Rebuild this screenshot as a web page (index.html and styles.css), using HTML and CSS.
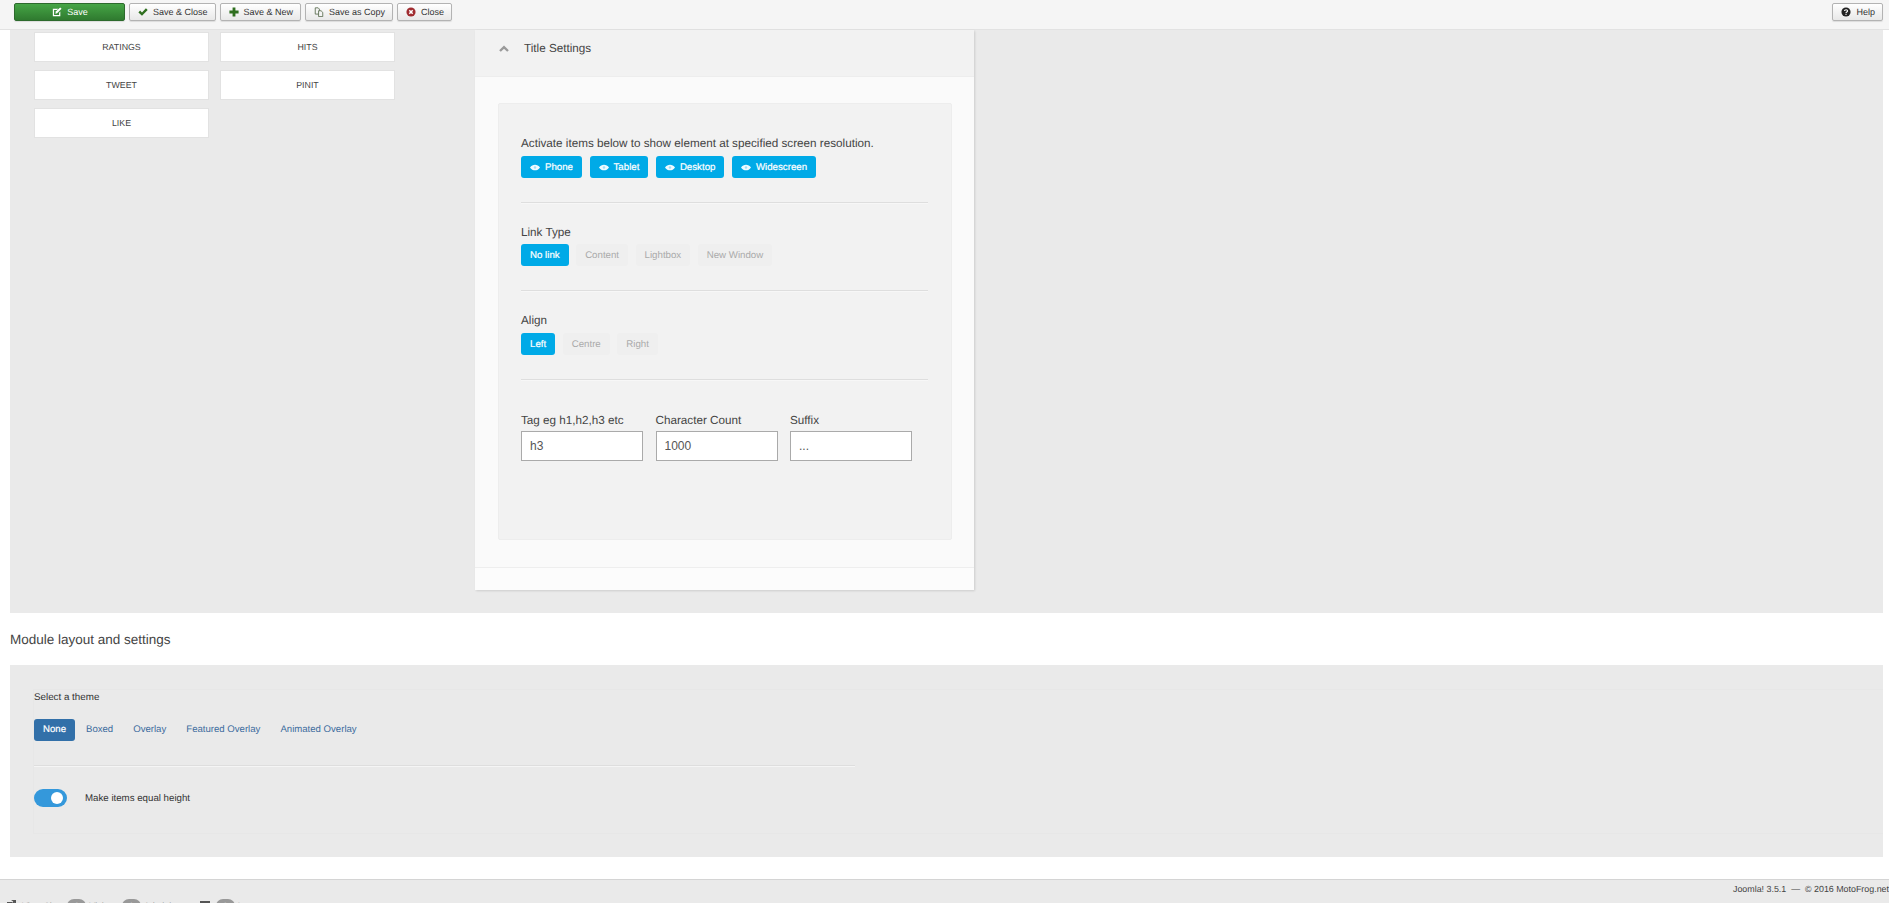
FILE: index.html
```html
<!DOCTYPE html>
<html lang="en">
<head>
    <meta charset="UTF-8">
    <title>Module settings</title>
    <link rel="stylesheet" href="styles.css">
</head>
<body>
    <div class="toolbar">
        <button class="tbtn tbtn-save">
            <svg class="ico" viewBox="0 0 12 12"><path d="M1 2h6.500L6 3.500H2.500v6h6V7L10 5.500V11H1z" fill="#fff"/><path d="M4.500 5.500 9.800.5l1.700 1.700L6.200 7.500l-2.200.5z" fill="#fff"/></svg>
            Save
        </button>
        <button class="tbtn">
            <svg class="ico" viewBox="0 0 12 12"><path d="M.5 6.500 2.500 4.300l2.300 2.300L9.500 1.500l2.100 2.100L4.800 10.500z" fill="#2f6f1f"/></svg>
            Save &amp; Close
        </button>
        <button class="tbtn">
            <svg class="ico" viewBox="0 0 12 12"><path d="M4.300.5h3.400v3.800h3.800v3.400H7.700v3.800H4.300V7.700H.5V4.300h3.800z" fill="#2f6f1f"/></svg>
            Save &amp; New
        </button>
        <button class="tbtn">
            <svg class="ico" viewBox="0 0 12 12"><path d="M1.500 1h3.500l1.500 1.500v6h-5z" fill="#f4f4f4" stroke="#55694a"/><path d="M5.500 4.500h3l2 2v5h-5z" fill="#f4f4f4" stroke="#55694a"/></svg>
            Save as Copy
        </button>
        <button class="tbtn">
            <svg class="ico" viewBox="0 0 12 12"><circle cx="6" cy="6" r="5.500" fill="#a02c30"/><path d="M4 4l4 4M8 4l-4 4" stroke="#fff" stroke-width="1.800"/></svg>
            Close
        </button>
        <button class="tbtn tbtn-help">
            <svg class="ico" viewBox="0 0 12 12"><circle cx="6" cy="6" r="5.500" fill="#222"/><path d="M4.200 4.700C4.300 2.800 7.900 2.800 7.900 4.700 7.900 6 6 6 6 7.200" fill="none" stroke="#fff" stroke-width="1.400"/><rect x="5.300" y="8.100" width="1.400" height="1.400" fill="#fff"/></svg>
            Help
        </button>
    </div>

    <div class="grey-panel top-panel">
        <div class="cards">
            <div class="card">RATINGS</div>
            <div class="card">HITS</div>
            <div class="card">TWEET</div>
            <div class="card">PINIT</div>
            <div class="card">LIKE</div>
        </div>

        <div class="accordion">
            <div class="acc-head">
                <svg class="chevron" viewBox="0 0 10 7"><path d="M1 6 5 2.200 9 6" fill="none" stroke="#9a9a9a" stroke-width="2.400"/></svg>
                Title Settings
            </div>
            <div class="acc-body">
                <div class="inner-box">
                    <div class="group">
                        <div class="lbl">Activate items below to show element at specified screen resolution.</div>
                        <div class="pills">
                            <span class="pill on"><svg class="eye" viewBox="0 0 10 7"><path d="M0 3.500C2.500-.3 7.500-.3 10 3.500 7.500 7.300 2.500 7.300 0 3.500z" fill="#eefaff"/><circle cx="5" cy="3.500" r="1.200" fill="#9fdff7"/></svg>Phone</span>
                            <span class="pill on"><svg class="eye" viewBox="0 0 10 7"><path d="M0 3.500C2.500-.3 7.500-.3 10 3.500 7.500 7.300 2.500 7.300 0 3.500z" fill="#eefaff"/><circle cx="5" cy="3.500" r="1.200" fill="#9fdff7"/></svg>Tablet</span>
                            <span class="pill on"><svg class="eye" viewBox="0 0 10 7"><path d="M0 3.500C2.500-.3 7.500-.3 10 3.500 7.500 7.300 2.500 7.300 0 3.500z" fill="#eefaff"/><circle cx="5" cy="3.500" r="1.200" fill="#9fdff7"/></svg>Desktop</span>
                            <span class="pill on"><svg class="eye" viewBox="0 0 10 7"><path d="M0 3.500C2.500-.3 7.500-.3 10 3.500 7.500 7.300 2.500 7.300 0 3.500z" fill="#eefaff"/><circle cx="5" cy="3.500" r="1.200" fill="#9fdff7"/></svg>Widescreen</span>
                        </div>
                    </div>
                    <div class="group">
                        <div class="lbl">Link Type</div>
                        <div class="pills">
                            <span class="pill on">No link</span>
                            <span class="pill">Content</span>
                            <span class="pill">Lightbox</span>
                            <span class="pill">New Window</span>
                        </div>
                    </div>
                    <div class="group">
                        <div class="lbl">Align</div>
                        <div class="pills">
                            <span class="pill on">Left</span>
                            <span class="pill">Centre</span>
                            <span class="pill">Right</span>
                        </div>
                    </div>
                    <div class="fields">
                        <div class="field">
                            <div class="lbl">Tag eg h1,h2,h3 etc</div>
                            <input class="inp" type="text" value="h3">
                        </div>
                        <div class="field">
                            <div class="lbl">Character Count</div>
                            <input class="inp" type="text" value="1000">
                        </div>
                        <div class="field">
                            <div class="lbl">Suffix</div>
                            <input class="inp" type="text" value="...">
                        </div>
                    </div>
                </div>
            </div>
            <div class="acc-foot"></div>
        </div>
    </div>

    <h4 class="section-title">Module layout and settings</h4>

    <div class="grey-panel module-panel">
        <div class="module-inner">
            <div class="theme-label">Select a theme</div>
            <div class="themes">
                <a class="theme active">None</a>
                <a class="theme">Boxed</a>
                <a class="theme">Overlay</a>
                <a class="theme">Featured Overlay</a>
                <a class="theme">Animated Overlay</a>
            </div>
            <div class="module-rule"></div>
            <div class="switch-row">
                <span class="switch"><span class="knob"></span></span>
                <span class="switch-label">Make items equal height</span>
            </div>
        </div>
    </div>

    <div class="status">
        <div class="status-left">
            <span class="st-item st-view">
                <svg class="st-ico" viewBox="0 0 9 9"><path d="M0 2h5v1H1v5h5V5h1v4H0z" fill="#555"/><path d="M4 0h5v4L7.500 2.700 5 5 4 4l2.300-2.500z" fill="#555"/></svg>
                View Site
            </span>
            <span class="st-item"><span class="count">0</span>Visitors</span>
            <span class="st-item"><span class="count">1</span>Administrator</span>
            <span class="st-item"><span class="square"></span><span class="count">0</span>Log out</span>
        </div>
        <div class="status-right">Joomla! 3.5.1 &nbsp;&mdash;&nbsp; &copy; 2016 MotoFrog.net</div>
    </div>
</body>
</html>
```

FILE: styles.css
```css
* {
    box-sizing: border-box;
}
html, body {
    height: 903px;
    overflow: hidden;
}
body {
    margin: 0;
    background: #fff;
    color: #444;
    font-family: "Liberation Sans", Arial, sans-serif;
    font-size: 13px;
    text-rendering: geometricPrecision;
}

/* top bar */
.toolbar {
    height: 30px;
    padding: 3px 6px 0 14px;
    display: flex;
    gap: 4px;
    background: #f5f5f5;
    border-bottom: 1px solid #e2e2e2;
}
.tbtn {
    height: 18px;
    padding: 0 7px 0 8px;
    display: flex;
    align-items: center;
    justify-content: center;
    gap: 5px;
    font-family: inherit;
    font-size: 9px;
    text-rendering: geometricPrecision;
    color: #333;
    background: linear-gradient(#fff, #e8e8e8);
    border: 1px solid #b3b3b3;
    border-radius: 2px;
    box-shadow: 0 1px 1px rgba(0, 0, 0, .1);
}
.tbtn-save {
    width: 111px;
    color: #fff;
    background: linear-gradient(#46a546, #2f7a2f);
    border-color: #2d6a2d;
}
.tbtn-help {
    margin-left: auto;
}
.ico {
    width: 10px;
    height: 10px;
}

/* shared grey area */
.grey-panel {
    margin: 0 6px 0 10px;
    background: #eaeaea;
}
.top-panel {
    height: 583px;
    display: flex;
    align-items: flex-start;
}

/* left cards */
.cards {
    width: 441px;
    padding: 2px 0 0 24px;
    display: grid;
    grid-template-columns: 175px 175px;
    grid-auto-rows: 30px;
    column-gap: 11px;
    row-gap: 8px;
}
.card {
    display: flex;
    align-items: center;
    justify-content: center;
    font-size: 8.800px;
    background: #fff;
    border: 1px solid #e2e2e2;
}

/* title settings */
.accordion {
    width: 499px;
    margin-left: 24px;
    background: #fafafa;
    box-shadow: 1px 1px 2px rgba(0, 0, 0, .12);
}
.acc-head {
    height: 47px;
    padding: 0 0 9px 24px;
    display: flex;
    align-items: center;
    gap: 15px;
    font-size: 11.700px;
    background: #f2f2f2;
    border-bottom: 1px solid #ededed;
}
.chevron {
    width: 10px;
    height: 7px;
}
.acc-body {
    padding: 26px 22px 27px 23px;
    border-bottom: 1px solid #eee;
}
.inner-box {
    height: 437px;
    padding: 32px 23px 0 22px;
    background: #f2f2f2;
    border: 1px solid #ededed;
    border-radius: 2px;
}
.group {
    padding-bottom: 24px;
    border-bottom: 1px solid #dedede;
    box-shadow: 0 1px 0 #f7f7f7;
}
.group + .group {
    padding-top: 22px;
}
.group + .group .pills {
    margin-top: 3px;
}
.group:nth-child(3) .pills {
    margin-top: 4px;
}
.lbl {
    height: 16px;
    line-height: 16px;
    font-size: 11.700px;
}
.pills {
    margin-top: 4px;
    display: flex;
    gap: 7.500px;
}
.pill {
    height: 22px;
    padding: 0 9px;
    display: flex;
    align-items: center;
    font-size: 9.700px;
    color: #aaa;
    background: #efefef;
    border-radius: 3px;
}
.pill.on {
    color: #fff;
    -webkit-text-stroke: .2px #fff;
    background: #00aae7;
}
.eye {
    width: 10px;
    height: 7px;
    margin-right: 5px;
}
.fields {
    padding-top: 33px;
    display: flex;
    gap: 12.500px;
}
.field {
    width: 122px;
}
.inp {
    width: 122px;
    height: 30px;
    margin-top: 2px;
    padding: 0 8px;
    font-family: inherit;
    font-size: 12px;
    color: #555;
    background: #fff;
    border: 1px solid #aaa;
}
.acc-foot {
    height: 22px;
    background: #fcfcfc;
}

/* module section */
.section-title {
    height: 52px;
    margin: 0 0 0 10px;
    line-height: 53px;
    font-size: 13.500px;
    font-weight: normal;
}
.module-panel {
    height: 192px;
    padding: 24px 0 23px 23px;
}
.module-inner {
    height: 145px;
    border-top: 1px solid #e7e7e7;
    border-left: 1px solid #e7e7e7;
    border-bottom: 1px solid #e7e7e7;
}
.theme-label {
    height: 15px;
    line-height: 15px;
    font-size: 9.800px;
    color: #333;
}
.themes {
    margin-top: 14px;
    display: flex;
    align-items: center;
    font-size: 9.600px;
    color: #3d6c9e;
}
.theme {
    height: 22px;
    line-height: 22px;
    padding: 0 10px;
}
.theme.active {
    width: 41px;
    margin-right: 1px;
    padding: 0;
    text-align: center;
    color: #fff;
    -webkit-text-stroke: .2px #fff;
    background: #3270a9;
    border-radius: 3px;
}
.module-rule {
    width: 821px;
    margin-top: 24px;
    border-top: 1px solid #dedede;
    box-shadow: 0 1px 0 #f5f5f5;
}
.switch-row {
    margin-top: 23px;
    display: flex;
    align-items: center;
    gap: 18px;
    font-size: 9.700px;
    color: #333;
}
.switch {
    width: 33px;
    height: 18px;
    padding: 3px 4px;
    display: flex;
    justify-content: flex-end;
    background: #3498db;
    border-radius: 9px;
}
.knob {
    width: 12px;
    height: 12px;
    background: #fff;
    border-radius: 50%;
}

/* bottom status bar */
.status {
    height: 24px;
    margin-top: 22px;
    padding: 4px 0 0 7px;
    display: flex;
    justify-content: space-between;
    font-size: 9px;
    background: #eaeaea;
    border-top: 1px solid #d4d4d4;
}
.status-left {
    padding-top: 15px;
    display: flex;
    gap: 3px;
}
.st-item {
    display: flex;
    gap: 3px;
    line-height: 15px;
    color: #666;
}
.st-view {
    gap: 6px;
    margin-right: 5px;
}
.st-ico {
    width: 9px;
    height: 9px;
    margin-top: 1px;
}
.count {
    width: 19px;
    height: 14px;
    text-align: center;
    color: #fff;
    background: #999;
    border-radius: 7px;
}
.square {
    width: 10px;
    height: 9px;
    margin: 2px 3px 0 0;
    background: #555;
}
.status-right {
    height: 14px;
    font-size: 8.900px;
    white-space: nowrap;
}
```
